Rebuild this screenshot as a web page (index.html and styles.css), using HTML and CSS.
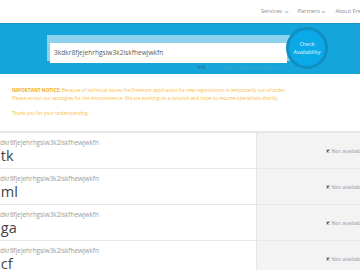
FILE: index.html
```html
<!DOCTYPE html>
<html lang="en">
<head>
  <meta charset="UTF-8">
  <meta name="viewport" content="width=device-width, initial-scale=1">
  <title>Freenom - Check Availability</title>
  <link rel="stylesheet" href="styles.css">
</head>
<body>

  <div class="topbar">
    <ul class="nav">
      <li>Services <svg class="caret" viewBox="0 0 6 4"><path d="M1 1l2 2 2-2" /></svg></li>
      <li>Partners <svg class="caret" viewBox="0 0 6 4"><path d="M1 1l2 2 2-2" /></svg></li>
      <li>About Freenom <svg class="caret" viewBox="0 0 6 4"><path d="M1 1l2 2 2-2" /></svg></li>
    </ul>
  </div>

  <div class="search-band">
    <div class="search-row">
      <div class="search-box">
        <input type="text" class="domain-input" value="3kdkr8fjejehrhgsiw3k2iskfhewjwkfn">
      </div>
      <button class="check-btn">Check<br>Availability</button>
    </div>
    <div class="search-hint"><b>Intl</b> <span>domain names are supported</span></div>
  </div>

  <div class="notice">
    <p><strong>IMPORTANT NOTICE:</strong> Because of technical issues the Freenom application for new registrations is temporarily out-of-order.<br>
    Please accept our apologies for the inconvenience. We are working on a solution and hope to resume operations shortly.</p>
    <p>Thank you for your understanding.</p>
  </div>

  <div class="results">
    <div class="row">
      <div class="domain">
        <span class="name">3kdkr8fjejehrhgsiw3k2iskfhewjwkfn</span>
        <span class="tld">.tk</span>
      </div>
      <div class="status"><svg class="x" viewBox="0 0 6 6"><path d="M1 1l4 4M5 1l-4 4" /></svg> Not available</div>
    </div>
    <div class="row">
      <div class="domain">
        <span class="name">3kdkr8fjejehrhgsiw3k2iskfhewjwkfn</span>
        <span class="tld">.ml</span>
      </div>
      <div class="status"><svg class="x" viewBox="0 0 6 6"><path d="M1 1l4 4M5 1l-4 4" /></svg> Not available</div>
    </div>
    <div class="row">
      <div class="domain">
        <span class="name">3kdkr8fjejehrhgsiw3k2iskfhewjwkfn</span>
        <span class="tld">.ga</span>
      </div>
      <div class="status"><svg class="x" viewBox="0 0 6 6"><path d="M1 1l4 4M5 1l-4 4" /></svg> Not available</div>
    </div>
    <div class="row">
      <div class="domain">
        <span class="name">3kdkr8fjejehrhgsiw3k2iskfhewjwkfn</span>
        <span class="tld">.cf</span>
      </div>
      <div class="status"><svg class="x" viewBox="0 0 6 6"><path d="M1 1l4 4M5 1l-4 4" /></svg> Not available</div>
    </div>
  </div>

</body>
</html>
```

FILE: styles.css
```css
html, body {
  margin: 0;
  padding: 0;
  overflow: hidden;
}
body {
  font-family: 'Open Sans', 'Liberation Sans', sans-serif;
  background: #fff;
  color: #444;
  width: 360px;
}
.topbar {
  height: 23px;
  overflow: hidden;
}
.nav {
  list-style: none;
  margin: 0;
  padding: 0 0 0 261px;
  display: flex;
  gap: 9px;
  font-size: 5.6px;
  color: #8a8a8a;
  line-height: 23px;
  white-space: nowrap;
}
.caret {
  width: 5px;
  height: 4px;
  vertical-align: middle;
  fill: none;
  stroke: #8a8a8a;
  stroke-width: 1;
}
.search-band {
  background: #16a5da;
  border-top: 1px solid #1593c2;
  height: 51px;
  box-sizing: border-box;
  padding-top: 3px;
}
.search-row {
  display: flex;
  align-items: center;
  padding-left: 47px;
  height: 42px;
}
.search-box {
  background: #8dd3ee;
  padding: 3px;
  width: 237px;
  height: 20px;
}
.domain-input {
  width: 100%;
  height: 100%;
  box-sizing: border-box;
  border: none;
  padding: 0 4px;
  font-family: inherit;
  font-size: 6.6px;
  color: #5a5a5a;
  outline: none;
}
.check-btn {
  width: 42px;
  height: 42px;
  border-radius: 50%;
  margin-left: -4px;
  background: #0aa9e8;
  border: 3px solid #108fc0;
  color: #e8f7fd;
  font-family: inherit;
  font-size: 5.4px;
  line-height: 8px;
  padding: 0;
  box-sizing: border-box;
}
.search-hint {
  margin-top: -5px;
  padding-left: 197px;
  font-size: 5px;
  line-height: 6px;
  white-space: nowrap;
}
.search-hint b {
  color: #2a78a8;
}
.search-hint span {
  color: #3aa3d2;
  margin-left: 12px;
  font-size: 4.5px;
}
.notice {
  padding: 13px 12px 6px;
  font-size: 4.75px;
  line-height: 7.5px;
  color: #f7bd45;
}
.notice p {
  margin: 0 0 7.5px;
}
.notice strong {
  color: #f2ad2c;
}
.results {
  border-top: 2px solid #e6e6e6;
}
.row {
  display: flex;
  height: 35px;
  border-bottom: 1px solid #e8e8e8;
}
.domain {
  width: 263px;
  flex: none;
  margin-left: -7px;
  padding-top: 5px;
  box-sizing: border-box;
  display: flex;
  flex-direction: column;
}
.name {
  font-size: 6.4px;
  color: #9a9a9a;
  line-height: 9px;
}
.tld {
  font-size: 14.5px;
  color: #444;
  line-height: 17px;
  margin-left: 4px;
}
.status {
  flex: 1;
  background: #f3f3f3;
  border-left: 1px solid #e6e6e6;
  font-size: 5.5px;
  color: #9a9a9a;
  padding-left: 69px;
  line-height: 36px;
  white-space: nowrap;
}
.status .x {
  width: 4px;
  height: 4px;
  vertical-align: middle;
  fill: none;
  stroke: #555;
  stroke-width: 1.6;
}
```
